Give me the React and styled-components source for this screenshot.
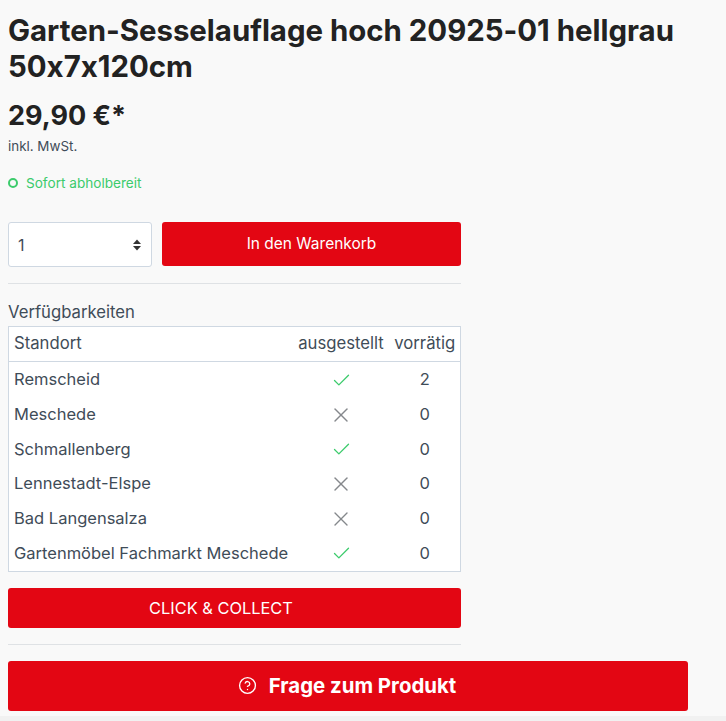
import React from "react";
import styled, { createGlobalStyle } from "styled-components";
import { Check, X, CircleHelp } from "lucide-react";

const GlobalStyle = createGlobalStyle`
  html, body {
    margin: 0;
    padding: 0;
    background: #f1f1f1;
    font-family: "Inter", "Liberation Sans", sans-serif;
    font-feature-settings: "calt" 0;
    color: #3f4c58;
  }
  * { box-sizing: border-box; }
`;

const rows = [
  { name: "Remscheid", shown: true, stock: 2, height: 35 },
  { name: "Meschede", shown: false, stock: 0, height: 35 },
  { name: "Schmallenberg", shown: true, stock: 0, height: 34 },
  { name: "Lennestadt-Elspe", shown: false, stock: 0, height: 35 },
  { name: "Bad Langensalza", shown: false, stock: 0, height: 35 },
  { name: "Gartenmöbel Fachmarkt Meschede", shown: true, stock: 0, height: 35, last: true },
];

export default function App() {
  return (
    <>
      <GlobalStyle />
      <Page>
        <Title>Garten-Sesselauflage hoch 20925-01 hellgrau 50x7x120cm</Title>
        <Price>29,90 €*</Price>
        <Tax>inkl. MwSt.</Tax>
        <Delivery>
          <Dot />
          Sofort abholbereit
        </Delivery>
        <Column>
          <BuyRow>
            <Qty>
              1
              <Arrows viewBox="0 0 10 14">
                <path d="M5 1.5 9 6H1z" />
                <path d="M5 12.5 1 8h8z" />
              </Arrows>
            </Qty>
            <RedButton $height={44} $size={15.5} $lift={2}>
              In den Warenkorb
            </RedButton>
          </BuyRow>
          <Line $gap={16} />
          <TableTitle>Verfügbarkeiten</TableTitle>
          <Table>
            <colgroup>
              <col />
              <col width="97" />
              <col width="71" />
            </colgroup>
            <thead>
              <tr>
                <HeadCell>Standort</HeadCell>
                <HeadCell $center>ausgestellt</HeadCell>
                <HeadCell $center>vorrätig</HeadCell>
              </tr>
            </thead>
            <tbody>
              {rows.map((r) => (
                <tr key={r.name}>
                  <Cell $height={r.height} $last={r.last}>
                    {r.name}
                  </Cell>
                  <Cell $height={r.height} $last={r.last} $center>
                    {r.shown ? (
                      <Check size={21} strokeWidth={1.5} color="#3ccb6c" />
                    ) : (
                      <X size={24} strokeWidth={1.4} color="#85888c" />
                    )}
                  </Cell>
                  <Cell $height={r.height} $last={r.last} $center>
                    {r.stock}
                  </Cell>
                </tr>
              ))}
            </tbody>
          </Table>
          <RedButton $height={40} $size={16.4} $shift={27}>
            CLICK &amp; COLLECT
          </RedButton>
          <Line $gap={16} />
        </Column>
        <QuestionButton>
          <CircleHelp size={19} strokeWidth={1.7} />
          Frage zum Produkt
        </QuestionButton>
      </Page>
    </>
  );
}

const Page = styled.div`
  background: #f9f9f9;
  height: 716px;
  padding: 13px 0 0 8px;
  overflow: hidden;
`;

const Title = styled.h1`
  margin: 0;
  width: 690px;
  font-size: 29.4px;
  line-height: 36px;
  font-weight: 700;
  color: #222;
`;

const Price = styled.div`
  margin-top: 13px;
  font-size: 27px;
  line-height: 36px;
  font-weight: 700;
  color: #222;
`;

const Tax = styled.div`
  margin-top: 2px;
  font-size: 13.4px;
  line-height: 20px;
  color: #3f4c58;
`;

const Delivery = styled.div`
  display: flex;
  align-items: center;
  gap: 8px;
  margin-top: 17px;
  font-size: 13.6px;
  line-height: 20px;
  color: #3ccb6c;
`;

const Dot = styled.span`
  width: 10px;
  height: 10px;
  border: 2px solid #3ccb6c;
  border-radius: 50%;
`;

const Column = styled.div`
  width: 453px;
  margin-top: 29px;
`;

const BuyRow = styled.div`
  display: flex;
  align-items: flex-start;
  gap: 10px;
`;

const Qty = styled.div`
  flex: 0 0 144px;
  height: 45px;
  display: flex;
  align-items: center;
  justify-content: space-between;
  padding: 0 9px;
  background: #fff;
  border: 1px solid #cfd8e2;
  border-radius: 3px;
  font-size: 16px;
  color: #3f4c58;
`;

const Arrows = styled.svg`
  width: 10px;
  height: 14px;
  fill: #333;
`;

const RedButton = styled.div`
  flex: 1;
  height: ${(p) => p.$height}px;
  display: flex;
  align-items: center;
  justify-content: center;
  padding-right: ${(p) => p.$shift || 0}px;
  padding-bottom: ${(p) => p.$lift || 0}px;
  background: #e30613;
  border-radius: 3px;
  color: #fff;
  font-size: ${(p) => p.$size}px;
`;

const Line = styled.div`
  height: 1px;
  background: #dfe2e5;
  margin-top: ${(p) => p.$gap}px;
`;

const TableTitle = styled.div`
  margin-top: 19px;
  font-size: 16.7px;
  line-height: 19px;
  color: #3f4c58;
`;

const Table = styled.table`
  width: 453px;
  table-layout: fixed;
  margin: 4px 0 16px;
  background: #fff;
  border: 1px solid #cfd8e2;
  border-collapse: collapse;
  font-size: 16.5px;
`;

const HeadCell = styled.th`
  height: 35px;
  padding: 0 0 2px ${(p) => (p.$center ? 0 : 5)}px;
  font-size: 16.7px;
  font-weight: 400;
  text-align: ${(p) => (p.$center ? "center" : "left")};
  border-bottom: 1px solid #cfd8e2;
  white-space: nowrap;
`;

const Cell = styled.td`
  height: ${(p) => p.$height + (p.$last ? 1 : 0)}px;
  padding: 0 0 ${(p) => (p.$last ? 1 : 0)}px ${(p) => (p.$center ? 0 : 5)}px;
  text-align: ${(p) => (p.$center ? "center" : "left")};
  vertical-align: middle;
  white-space: nowrap;
  svg { display: block; margin: 2px auto 0; }
`;

const QuestionButton = styled.div`
  display: flex;
  align-items: center;
  justify-content: center;
  gap: 12px;
  width: 680px;
  height: 50px;
  margin-top: 16px;
  padding: 0 2px 1px 0;
  background: #e30613;
  border-radius: 3px;
  color: #fff;
  font-size: 20.4px;
  font-weight: 700;
`;
